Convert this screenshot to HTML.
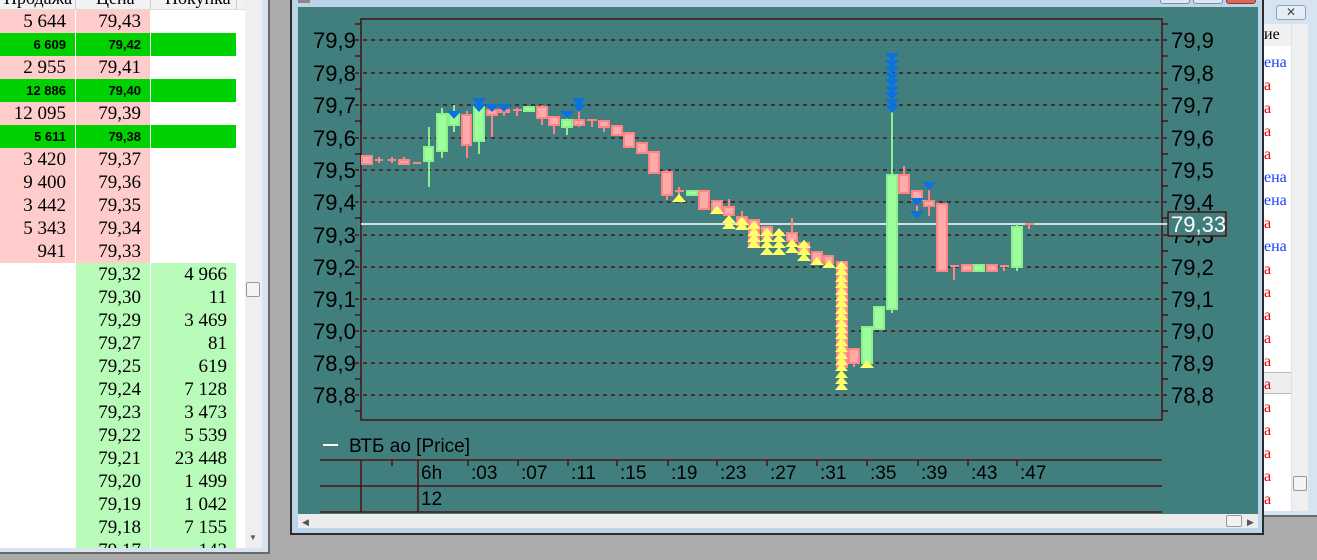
<!DOCTYPE html>
<html><head><meta charset="utf-8">
<style>
*{margin:0;padding:0;box-sizing:border-box}
body{width:1317px;height:560px;overflow:hidden;background:#ababab;position:relative;font-family:"Liberation Sans",sans-serif}
.abs{position:absolute}
#left{left:0;top:0;width:270px;height:554px;background:#d7e4f2;border-right:2px solid #6a6a6a;border-bottom:2px solid #6a6a6a}
#tbl{left:0;top:0;width:245px;height:548px;background:#fff;overflow:hidden}
.row{position:absolute;left:0;width:237px;height:23px;font-family:"Liberation Serif",serif;font-size:19px;line-height:23px}
.row div{position:absolute;top:0;height:23px;text-align:right;padding-right:9px}
.c1{left:0;width:75px}.c2{left:76px;width:74px}.c3{left:151px;width:85px}
.pk{background:#ffcccc}.gn{background:#00d100}.lg{background:#b9fcb9}
.b{font-family:"Liberation Sans",sans-serif;font-weight:bold;font-size:13px}
#hdr{left:0;top:0;width:245px;height:10px;background:#f2f2f2;border-bottom:1px solid #ddd;overflow:hidden}
#hdr span{position:absolute;top:-12px;font-family:"Liberation Serif",serif;font-size:18px;color:#000}
</style></head><body>

<div id="left" class="abs">
 <div id="tbl" class="abs">
  <div id="hdr" class="abs"><span style="left:4px">Продажа</span><span style="left:96px">Цена</span><span style="left:165px">Покупка</span>
   <div class="abs" style="left:75px;top:0;width:1px;height:10px;background:#ccc"></div><div class="abs" style="left:150px;top:0;width:1px;height:10px;background:#ccc"></div><div class="abs" style="left:236px;top:0;width:1px;height:10px;background:#ccc"></div></div>
  <div class="row" style="top:10px"><div class="c1 pk">5 644</div><div class="c2 pk">79,43</div></div>
  <div class="row b" style="top:33px"><div class="c1 gn b">6 609</div><div class="c2 gn b">79,42</div><div class="c3 gn"></div></div>
  <div class="row" style="top:56px"><div class="c1 pk">2 955</div><div class="c2 pk">79,41</div></div>
  <div class="row" style="top:79px"><div class="c1 gn b">12 886</div><div class="c2 gn b">79,40</div><div class="c3 gn"></div></div>
  <div class="row" style="top:102px"><div class="c1 pk">12 095</div><div class="c2 pk">79,39</div></div>
  <div class="row" style="top:125px"><div class="c1 gn b">5 611</div><div class="c2 gn b">79,38</div><div class="c3 gn"></div></div>
  <div class="row" style="top:148px"><div class="c1 pk">3 420</div><div class="c2 pk">79,37</div></div>
  <div class="row" style="top:171px"><div class="c1 pk">9 400</div><div class="c2 pk">79,36</div></div>
  <div class="row" style="top:194px"><div class="c1 pk">3 442</div><div class="c2 pk">79,35</div></div>
  <div class="row" style="top:217px"><div class="c1 pk">5 343</div><div class="c2 pk">79,34</div></div>
  <div class="row" style="top:240px"><div class="c1 pk">941</div><div class="c2 pk">79,33</div></div>
  <div class="row" style="top:263px"><div class="c2 lg">79,32</div><div class="c3 lg">4 966</div></div>
  <div class="row" style="top:286px"><div class="c2 lg">79,30</div><div class="c3 lg">11</div></div>
  <div class="row" style="top:309px"><div class="c2 lg">79,29</div><div class="c3 lg">3 469</div></div>
  <div class="row" style="top:332px"><div class="c2 lg">79,27</div><div class="c3 lg">81</div></div>
  <div class="row" style="top:355px"><div class="c2 lg">79,25</div><div class="c3 lg">619</div></div>
  <div class="row" style="top:378px"><div class="c2 lg">79,24</div><div class="c3 lg">7 128</div></div>
  <div class="row" style="top:401px"><div class="c2 lg">79,23</div><div class="c3 lg">3 473</div></div>
  <div class="row" style="top:424px"><div class="c2 lg">79,22</div><div class="c3 lg">5 539</div></div>
  <div class="row" style="top:447px"><div class="c2 lg">79,21</div><div class="c3 lg">23 448</div></div>
  <div class="row" style="top:470px"><div class="c2 lg">79,20</div><div class="c3 lg">1 499</div></div>
  <div class="row" style="top:493px"><div class="c2 lg">79,19</div><div class="c3 lg">1 042</div></div>
  <div class="row" style="top:516px"><div class="c2 lg">79,18</div><div class="c3 lg">7 155</div></div>
  <div class="row" style="top:539px"><div class="c2 lg">79,17</div><div class="c3 lg">143</div></div>
 </div>
 <div class="abs" style="left:245px;top:0;width:17px;height:548px;background:#efefef"></div>
 <div class="abs" style="left:246px;top:282px;width:14px;height:15px;background:#f4f4f4;border:1px solid #999;border-radius:2px"></div>
 <div class="abs" style="left:249px;top:533px;font-size:8px;color:#555">▼</div>
</div>

<!-- chart window -->
<div class="abs" style="left:290px;top:0;width:974px;height:535px;background:#bcd3ea;border:2px solid #2b2b2b;border-top:none"></div>
<div class="abs" style="left:298px;top:7px;width:960px;height:507px;background:#417f7e"></div>
<div class="abs" style="left:298px;top:514px;width:960px;height:14px;background:#ececec"></div>
<div class="abs" style="left:1226px;top:515px;width:16px;height:12px;background:#f2f2f2;border:1px solid #999;border-radius:2px"></div>
<div class="abs" style="left:1160px;top:-6px;width:30px;height:10px;border:1px solid #7a8ca0;background:#dfe8f2;border-radius:3px"></div>
<div class="abs" style="left:1193px;top:-6px;width:30px;height:10px;border:1px solid #7a8ca0;background:#dfe8f2;border-radius:3px"></div>
<div class="abs" style="left:1226px;top:-6px;width:30px;height:10px;border:1px solid #8a3a30;background:#d86a5a;border-radius:3px"></div>
<div class="abs" style="left:298px;top:0;width:12px;height:3px;background:#888"></div>

<!-- right window -->
<div class="abs" style="left:1264px;top:0;width:53px;height:517px;background:#d6e3f1;border-bottom:2px solid #6a6a6a"></div>
<div class="abs" style="left:1276px;top:5px;width:30px;height:15px;background:#e6edf5;border:1px solid #8fa0b3;border-radius:3px;font-size:12px;text-align:center;line-height:13px;color:#444">✕</div>
<div class="abs" style="left:1264px;top:24px;width:27px;height:487px;background:#fff;font-family:'Liberation Serif',serif;font-size:16px;overflow:hidden">
 <div class="abs" style="left:0;top:0;width:27px;height:22px;background:#f0f0f0;color:#000;line-height:22px">ие</div>
 <div class="abs" style="left:0;top:348px;width:27px;height:22px;background:#eee;border-top:1px solid #bbb;border-bottom:1px solid #bbb"></div>
 <div style="position:absolute;left:0;top:27px;line-height:23px">
  <div style="color:#1a3cff">ена</div><div style="color:#e00">а</div><div style="color:#e00">а</div><div style="color:#e00">а</div><div style="color:#e00">а</div><div style="color:#1a3cff">ена</div><div style="color:#1a3cff">ена</div><div style="color:#e00">а</div><div style="color:#1a3cff">ена</div><div style="color:#e00">а</div><div style="color:#e00">а</div><div style="color:#e00">а</div><div style="color:#e00">а</div><div style="color:#e00">а</div><div style="color:#e00">а</div><div style="color:#e00">а</div><div style="color:#e00">а</div><div style="color:#e00">а</div><div style="color:#e00">а</div><div style="color:#e00">а</div>
 </div>
</div>
<div class="abs" style="left:1292px;top:24px;width:16px;height:487px;background:#efefef"></div>
<div class="abs" style="left:1293px;top:476px;width:14px;height:15px;background:#f4f4f4;border:1px solid #999;border-radius:2px"></div>

<svg class="abs" style="left:0;top:0" width="1317" height="560" viewBox="0 0 1317 560">
<style>
.p rect{fill:#ffaaaa;stroke:#ff8585;stroke-width:2}
.g rect{fill:#9cff9c;stroke:#8cf08c;stroke-width:2}
.p line{stroke:#ff8585;stroke-width:2}
.g line{stroke:#8cf08c;stroke-width:2}
.ax{font-family:"Liberation Sans",sans-serif;font-size:22px;fill:#000}
.tm{font-family:"Liberation Sans",sans-serif;font-size:19px;fill:#000}
</style>
<g stroke="#4a0000" stroke-width="1.2" stroke-dasharray="4,4">
<line x1="355" y1="40" x2="1170" y2="40"/><line x1="355" y1="73" x2="1170" y2="73"/><line x1="355" y1="105" x2="1170" y2="105"/><line x1="355" y1="138" x2="1170" y2="138"/><line x1="355" y1="170" x2="1170" y2="170"/><line x1="355" y1="202" x2="1170" y2="202"/><line x1="355" y1="235" x2="1170" y2="235"/><line x1="355" y1="267" x2="1170" y2="267"/><line x1="355" y1="299" x2="1170" y2="299"/><line x1="355" y1="331" x2="1170" y2="331"/><line x1="355" y1="363" x2="1170" y2="363"/><line x1="355" y1="395" x2="1170" y2="395"/>
</g>
<g stroke="#4a0000" stroke-width="1.3">
<rect x="361" y="19" width="801" height="401" fill="none"/>
<path d="M355 24h6M355 56h6M355 89h6M355 121h6M355 154h6M355 186h6M355 218h6M355 251h6M355 283h6M355 315h6M355 347h6M355 379h6M355 411h6M1162 24h6M1162 56h6M1162 89h6M1162 121h6M1162 154h6M1162 186h6M1162 218h6M1162 251h6M1162 283h6M1162 315h6M1162 347h6M1162 379h6M1162 411h6"/>
</g>
<g class="ax">
<text x="313" y="48">79,9</text><text x="313" y="81">79,8</text><text x="313" y="113">79,7</text><text x="313" y="146">79,6</text><text x="313" y="178">79,5</text><text x="313" y="210">79,4</text><text x="313" y="243">79,3</text><text x="313" y="275">79,2</text><text x="313" y="307">79,1</text><text x="313" y="339">79,0</text><text x="313" y="371">78,9</text><text x="313" y="403">78,8</text>
<text x="1171" y="48">79,9</text><text x="1171" y="81">79,8</text><text x="1171" y="113">79,7</text><text x="1171" y="146">79,6</text><text x="1171" y="178">79,5</text><text x="1171" y="210">79,4</text><text x="1171" y="243">79,3</text><text x="1171" y="275">79,2</text><text x="1171" y="307">79,1</text><text x="1171" y="339">79,0</text><text x="1171" y="371">78,9</text><text x="1171" y="403">78,8</text>
</g>
<line x1="361" y1="224" x2="1168" y2="224" stroke="#fff" stroke-width="1.5"/>
<rect x="1168" y="212" width="58" height="24" fill="#417f7e" stroke="#500000" stroke-width="1.3"/>
<text x="1171" y="232" class="ax" style="fill:#fff">79,33</text>

<!-- candles -->
<g class="p">
<rect x="362" y="156" width="10" height="8"/>
<line x1="375" y1="160" x2="383" y2="160"/><line x1="379" y1="157" x2="379" y2="163"/>
<line x1="388" y1="160" x2="396" y2="160"/><line x1="392" y1="157" x2="392" y2="163"/>
<line x1="404" y1="157" x2="404" y2="160"/><rect x="399" y="160" width="10" height="4"/>
<line x1="413" y1="163" x2="421" y2="163"/>
<line x1="467" y1="111" x2="467" y2="158"/><rect x="462" y="115" width="9" height="30"/>
<line x1="492" y1="108" x2="492" y2="137"/><rect x="487" y="110" width="10" height="5"/>
<line x1="504" y1="108" x2="504" y2="116"/><rect x="499" y="110" width="10" height="2"/>
<line x1="513" y1="110" x2="522" y2="110"/><line x1="517" y1="108" x2="517" y2="116"/>
<line x1="542" y1="105" x2="542" y2="125"/><rect x="537" y="107" width="10" height="11"/>
<line x1="554" y1="117" x2="554" y2="134"/><rect x="549" y="117" width="10" height="8"/>
<line x1="579" y1="110" x2="579" y2="127"/><rect x="574" y="120" width="10" height="5"/>
<line x1="587" y1="120" x2="597" y2="120"/><line x1="592" y1="120" x2="592" y2="127"/>
<line x1="604" y1="121" x2="604" y2="132"/><rect x="599" y="121" width="10" height="6"/>
<rect x="612" y="126" width="10" height="9"/>
<rect x="624" y="133" width="10" height="14"/>
<rect x="637" y="143" width="10" height="10"/>
<rect x="649" y="152" width="10" height="21"/>
<line x1="667" y1="170" x2="667" y2="200"/><rect x="662" y="172" width="10" height="23"/>
<line x1="675" y1="191" x2="684" y2="191"/><line x1="679" y1="187" x2="679" y2="197"/>
<rect x="699" y="191" width="10" height="18"/>
<rect x="712" y="201" width="10" height="11"/>
<line x1="729" y1="199" x2="729" y2="207"/><rect x="724" y="207" width="10" height="8"/>
<line x1="742" y1="211" x2="742" y2="217"/><rect x="737" y="217" width="10" height="8"/>
<rect x="749" y="220" width="10" height="27"/>
<rect x="762" y="227" width="10" height="10"/>
<line x1="775" y1="233" x2="784" y2="233"/><line x1="779" y1="233" x2="779" y2="240"/>
<line x1="792" y1="218" x2="792" y2="233"/><rect x="787" y="233" width="10" height="8"/>
<line x1="804" y1="240" x2="804" y2="243"/><rect x="799" y="243" width="10" height="9"/>
<rect x="812" y="252" width="10" height="9"/>
<rect x="824" y="256" width="9" height="7"/>
<rect x="837" y="262" width="10" height="105"/>
<line x1="854" y1="349" x2="854" y2="367"/><rect x="849" y="349" width="10" height="14"/>
<line x1="904" y1="166" x2="904" y2="175"/><rect x="899" y="175" width="10" height="18"/>
<line x1="917" y1="191" x2="917" y2="218"/><rect x="912" y="191" width="10" height="9"/>
<line x1="929" y1="190" x2="929" y2="216"/><rect x="924" y="201" width="10" height="5"/>
<rect x="937" y="204" width="10" height="67"/>
<line x1="950" y1="266" x2="959" y2="266"/><line x1="954" y1="266" x2="954" y2="280"/>
<rect x="962" y="265" width="10" height="6"/>
<rect x="987" y="265" width="10" height="6"/>
<line x1="1000" y1="266" x2="1009" y2="266"/><line x1="1004" y1="266" x2="1004" y2="271"/>
<line x1="1025" y1="224" x2="1034" y2="224"/><line x1="1029" y1="224" x2="1029" y2="229"/>
</g>
<g class="g">
<line x1="429" y1="127" x2="429" y2="187"/><rect x="424" y="147" width="9" height="14"/>
<line x1="442" y1="108" x2="442" y2="158"/><rect x="437" y="114" width="10" height="37"/>
<line x1="454" y1="105" x2="454" y2="132"/><rect x="449" y="114" width="10" height="11"/>
<line x1="479" y1="105" x2="479" y2="154"/><rect x="474" y="107" width="10" height="34"/>
<rect x="524" y="107" width="10" height="4"/>
<line x1="567" y1="118" x2="567" y2="135"/><rect x="562" y="120" width="10" height="7"/>
<rect x="687" y="191" width="10" height="4"/>
<rect x="862" y="327" width="10" height="36"/>
<rect x="874" y="307" width="10" height="22"/>
<line x1="892" y1="53" x2="892" y2="313"/><rect x="887" y="175" width="10" height="134"/>
<rect x="974" y="265" width="10" height="6"/>
<line x1="1017" y1="224" x2="1017" y2="271"/><rect x="1012" y="227" width="10" height="40"/>
</g>
<!-- blue down triangles -->
<g fill="#0a72e0">
<path d="M447 111h14l-7 8z"/><path d="M472 98h14l-7 8z"/><path d="M472 104h14l-7 8z"/><path d="M485 104h14l-7 8z"/><path d="M497 104h14l-7 8z"/><path d="M560 111h14l-7 8z"/><path d="M572 98h14l-7 8z"/><path d="M572 104h14l-7 8z"/>
<path d="M910 198h14l-7 8z"/><path d="M910 211h14l-7 8z"/><path d="M922 182h14l-7 8z"/>
<path d="M885 53h14l-7 8z"/><path d="M885 60h14l-7 8z"/><path d="M885 66h14l-7 8z"/><path d="M885 73h14l-7 8z"/><path d="M885 79h14l-7 8z"/><path d="M885 86h14l-7 8z"/><path d="M885 92h14l-7 8z"/><path d="M885 99h14l-7 8z"/><path d="M885 105h14l-7 8z"/>
</g>
<!-- yellow up triangles -->
<g fill="#ffff66">
<path d="M672 202h14l-7-8z"/><path d="M710 214h14l-7-8z"/><path d="M722 223h14l-7-8z"/><path d="M722 229h14l-7-8z"/><path d="M735 225h14l-7-8z"/><path d="M735 230h14l-7-8z"/>
<path d="M747 229h14l-7-8z"/><path d="M747 236h14l-7-8z"/><path d="M747 242h14l-7-8z"/><path d="M747 248h14l-7-8z"/>
<path d="M760 236h14l-7-8z"/><path d="M760 242h14l-7-8z"/><path d="M760 248h14l-7-8z"/><path d="M760 255h14l-7-8z"/>
<path d="M772 236h14l-7-8z"/><path d="M772 242h14l-7-8z"/><path d="M772 248h14l-7-8z"/><path d="M772 255h14l-7-8z"/>
<path d="M785 247h14l-7-8z"/><path d="M785 253h14l-7-8z"/><path d="M797 248h14l-7-8z"/><path d="M797 255h14l-7-8z"/><path d="M797 261h14l-7-8z"/>
<path d="M810 265h14l-7-8z"/><path d="M822 268h14l-7-8z"/>
<path d="M835 269h13l-6.5-8z"/><path d="M835 275h13l-6.5-8z"/><path d="M835 282h13l-6.5-8z"/><path d="M835 288h13l-6.5-8z"/><path d="M835 295h13l-6.5-8z"/><path d="M835 301h13l-6.5-8z"/><path d="M835 307h13l-6.5-8z"/><path d="M835 314h13l-6.5-8z"/><path d="M835 320h13l-6.5-8z"/><path d="M835 327h13l-6.5-8z"/><path d="M835 333h13l-6.5-8z"/><path d="M835 339h13l-6.5-8z"/><path d="M835 346h13l-6.5-8z"/><path d="M835 352h13l-6.5-8z"/><path d="M835 359h13l-6.5-8z"/><path d="M835 365h13l-6.5-8z"/><path d="M835 371h13l-6.5-8z"/><path d="M835 378h13l-6.5-8z"/><path d="M835 384h13l-6.5-8z"/><path d="M835 390h13l-6.5-8z"/>
<path d="M860 368h14l-7-8z"/>
</g>

<!-- legend -->
<line x1="323" y1="445" x2="338" y2="445" stroke="#fff" stroke-width="2"/>
<text x="349" y="452" class="tm">ВТБ ао [Price]</text>
<!-- time axis -->
<g stroke="#500000" stroke-width="1.3">
<path d="M320 460H1162M320 486H1162M320 512H1162M361 460V512M418 460V512M392 460v6M468 460v6M518 460v6M568 460v6M617 460v6M668 460v6M717 460v6M767 460v6M817 460v6M867 460v6M918 460v6M968 460v6M1017 460v6"/>
</g>
<g class="tm">
<text x="421" y="479">6h</text><text x="471" y="479">:03</text><text x="521" y="479">:07</text><text x="571" y="479">:11</text><text x="620" y="479">:15</text><text x="671" y="479">:19</text><text x="720" y="479">:23</text><text x="770" y="479">:27</text><text x="820" y="479">:31</text><text x="870" y="479">:35</text><text x="921" y="479">:39</text><text x="971" y="479">:43</text><text x="1020" y="479">:47</text>
<text x="421" y="505">12</text>
</g>
<text x="302" y="525" font-size="9" fill="#555">◀</text>
<text x="1247" y="525" font-size="9" fill="#555">▶</text>
</svg>
</body></html>
